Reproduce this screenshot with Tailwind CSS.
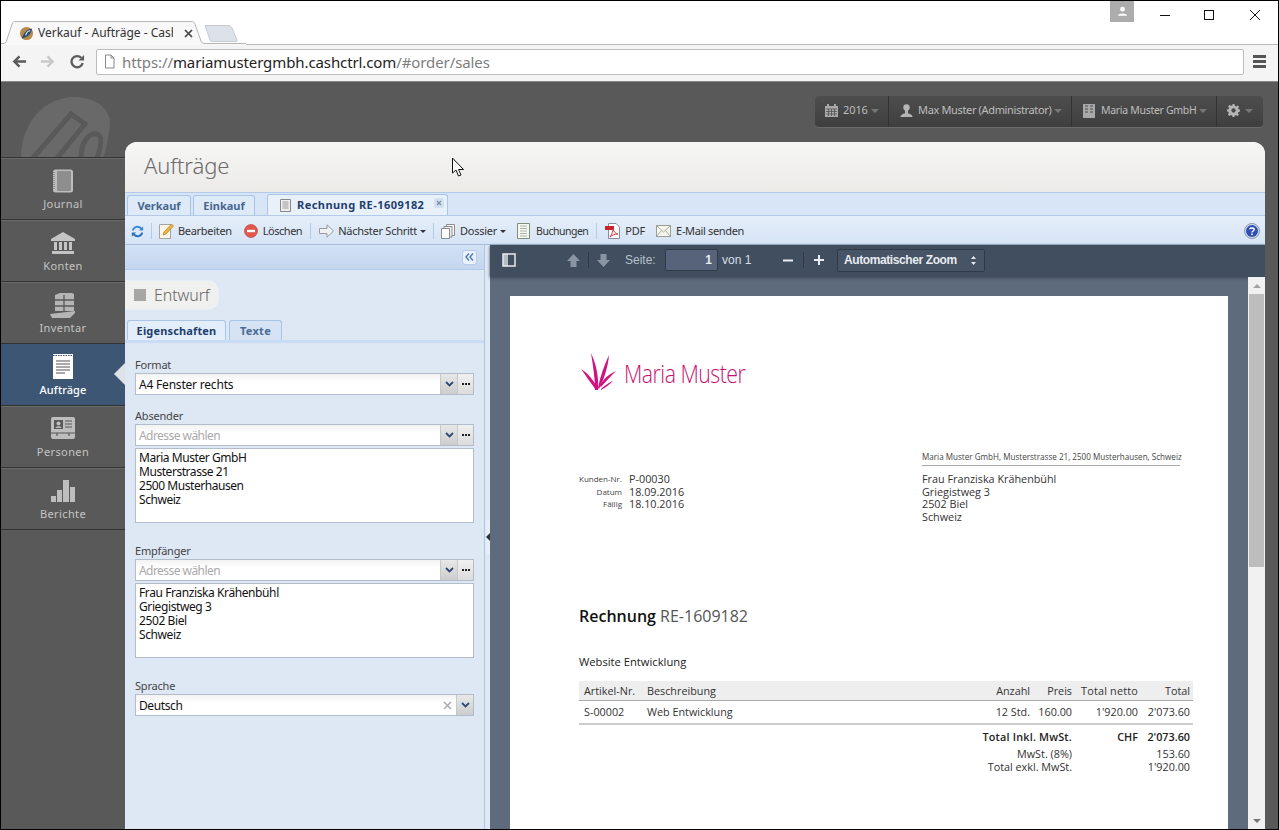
<!DOCTYPE html>
<html lang="de">
<head>
<meta charset="utf-8">
<title>Verkauf - Aufträge - CashCtrl</title>
<script src="https://cdn.jsdelivr.net/npm/@tailwindcss/browser@4"></script>
</head>
<body class="m-0 overflow-hidden bg-black">
<div class="relative flex h-[830px] w-[1279px] flex-col overflow-hidden border border-black bg-white font-['Noto_Sans',sans-serif]">

  <!-- Browser tab strip -->
  <div class="relative flex h-[44px] shrink-0 items-end border-b border-[#bcbcbc] bg-white pl-[18px]">
    <svg class="absolute left-0 top-0 h-[44px] w-[245px]" viewBox="0 0 245 44">
      <path d="M204 24.500H226C229 24.500 230 25 231 27L236 39C236.500 40 236 40.500 235 40.500H212C210 40.500 209.500 40 209 39Z" fill="#dde2ea" stroke="#c8ccd2"/>
      <path d="M0 44V42.500H2C4 42.500 5 41.500 5.500 40L11 23C11.500 21 13 20.500 15 20.500H190C192 20.500 193.500 21 194 23L200 40C200.500 41.500 201.500 42.500 204 42.500H245V44Z" fill="#f8f8f8"/>
      <path d="M0 42.500H2C4 42.500 5 41.500 5.500 40L11 23C11.500 21 13 20.500 15 20.500H190C192 20.500 193.500 21 194 23L200 40C200.500 41.500 201.500 42.500 204 42.500H245" fill="none" stroke="#b5b5b5"/>
    </svg>
    <div class="relative z-10 flex h-[22px] items-center">
      <svg class="h-[15px] w-[15px] shrink-0" viewBox="0 0 16 16"><circle cx="8" cy="8" r="7" fill="#b88a4a"/><path d="M3 13C5 8 8 3 14 3C13 8 10 12 3 13Z" fill="#234a7d"/><path d="M7 10C8 7 10 5 12 5" stroke="#e8e8e8" stroke-width="1.200" fill="none"/></svg>
      <span class="ml-[4px] w-[135px] overflow-hidden whitespace-nowrap text-[12px] leading-[16px] text-[#333]">Verkauf - Aufträge - CashCtrl</span>
      <svg class="ml-[11px] h-[9px] w-[9px]" viewBox="0 0 9 9"><path d="M1 1L8 8M8 1L1 8" stroke="#444" stroke-width="1.700"/></svg>
    </div>
    <div class="absolute right-[144px] top-0 flex h-[21px] w-[24px] items-center justify-center bg-[#acacac]">
      <svg class="h-[11px] w-[11px]" viewBox="0 0 12 12"><circle cx="6" cy="3.500" r="2.600" fill="#fff"/><path d="M1 10.500C1.500 7.500 10.500 7.500 11 10.500Z" fill="#fff"/></svg>
    </div>
    <div class="absolute left-[1158px] top-[8px] flex items-center">
      <svg class="h-[12px] w-[12px]" viewBox="0 0 12 12"><path d="M1 6.500H11" stroke="#111" stroke-width="1"/></svg>
      <svg class="ml-[32px] h-[12px] w-[12px]" viewBox="0 0 12 12"><rect x="1.500" y="1.500" width="9" height="9" fill="none" stroke="#111"/></svg>
      <svg class="ml-[34px] h-[12px] w-[12px]" viewBox="0 0 12 12"><path d="M1 1L11 11M11 1L1 11" stroke="#111" stroke-width="1"/></svg>
    </div>
  </div>

  <!-- Browser toolbar -->
  <div class="flex h-[36px] shrink-0 items-center bg-[#f4f4f4] pb-[3px] pl-[11px]">
    <svg class="h-[15px] w-[15px]" viewBox="0 0 16 16"><path d="M15 8H3M8 2.500L2.500 8L8 13.500" fill="none" stroke="#5a5a5a" stroke-width="2.600"/></svg>
    <svg class="ml-[13px] h-[15px] w-[15px]" viewBox="0 0 16 16"><path d="M1 8H13M8 2.500L13.500 8L8 13.500" fill="none" stroke="#c8c8c8" stroke-width="2.600"/></svg>
    <svg class="ml-[15px] h-[15px] w-[15px]" viewBox="0 0 16 16"><path d="M13.500 9.500A6 6 0 1 1 12 4" fill="none" stroke="#5a5a5a" stroke-width="2.400"/><path d="M15 1V7H9Z" fill="#5a5a5a"/></svg>
    <div class="ml-[11px] flex h-[26px] w-[1148px] items-center rounded-[2px] border border-[#bdbdbd] bg-white pl-[6px]">
      <svg class="h-[15px] w-[13px]" viewBox="0 0 13 15"><path d="M2.500 1H8L11 4V14H2.500Z" fill="#fff" stroke="#8a8a8a"/><path d="M8 1V4H11" fill="none" stroke="#8a8a8a"/></svg>
      <span class="ml-[6px] whitespace-nowrap text-[15px] leading-[20px] tracking-[-0.1px] text-[#7d7d7d]">https://<span class="text-[#222]">mariamustergmbh.cashctrl.com</span>/#order/sales</span>
    </div>
    <div class="ml-[9px] flex w-[13px] flex-col gap-[2px]">
      <div class="h-[3px] bg-[#555]"></div><div class="h-[3px] bg-[#555]"></div><div class="h-[3px] bg-[#555]"></div>
    </div>
  </div>

  <!-- App -->
  <div class="flex min-h-0 flex-1 border-t border-[#8a8a8a] bg-[#595959]">

    <!-- Sidebar -->
    <aside class="flex w-[124px] shrink-0 flex-col">
      <div class="relative h-[75px] shrink-0 overflow-hidden">
        <svg class="absolute left-[18px] top-[14px] h-[62px] w-[92px]" viewBox="0 0 92 62"><path d="M2 62C2 28 24 1 56 1C74 1 88 10 91 24C91 36 88 50 84 62Z" fill="#696969"/><path d="M14 62L52 18L66 28L38 62M62 62C62 46 70 36 78 38C84 40 82 52 78 62" fill="none" stroke="#595959" stroke-width="5"/></svg>
      </div>
      <nav class="flex flex-col border-t border-[#333] text-[11px] tracking-[0.4px] text-[#c4c4c4]">
        <a class="flex h-[62px] flex-col items-center border-b border-[#333] pt-[11px] shadow-[inset_0_1px_0_#6a6a6a]">
          <svg class="h-[24px] w-[22px]" viewBox="0 0 22 24"><rect x="1" y="0.500" width="20" height="23" rx="2.500" fill="#bdbdbd"/><rect x="5" y="2" width="14" height="20" rx="1" fill="#8e8e8e"/><path d="M2 3V21" stroke="#666" stroke-width="1" stroke-dasharray="1 1"/></svg>
          <span class="mt-[4px] leading-[14px]">Journal</span>
        </a>
        <a class="flex h-[62px] flex-col items-center border-b border-[#333] pt-[11px] shadow-[inset_0_1px_0_#6a6a6a]">
          <svg class="h-[24px] w-[26px]" viewBox="0 0 26 24"><path d="M13 1L25 8V10H1V8Z" fill="#c4c4c4"/><path d="M4 11H7V19H4ZM9 11H12V19H9ZM14 11H17V19H14ZM19 11H22V19H19Z" fill="#c4c4c4"/><path d="M2 20H24V23H2Z" fill="#c4c4c4"/></svg>
          <span class="mt-[4px] leading-[14px]">Konten</span>
        </a>
        <a class="flex h-[62px] flex-col items-center border-b border-[#333] pt-[11px] shadow-[inset_0_1px_0_#6a6a6a]">
          <svg class="h-[25px] w-[26px]" viewBox="0 0 26 25"><path d="M5 2L10 0H22L24 1V18H5Z" fill="#b5b5b5"/><path d="M5 7H24M5 13H24M14 2V18" stroke="#595959" stroke-width="1.300"/><path d="M0 21L25 18V20L20 25H2Z" fill="#b5b5b5"/></svg>
          <span class="mt-[3px] leading-[14px]">Inventar</span>
        </a>
        <a class="relative flex h-[62px] flex-col items-center border-b border-[#333] bg-[#3d5674] pt-[10px] font-medium text-white">
          <svg class="h-[25px] w-[20px]" viewBox="0 0 20 25"><rect width="20" height="25" fill="#fff"/><path d="M0 1.500H20" stroke="#3d5674" stroke-width="1" stroke-dasharray="1.500 1"/><path d="M3 7H17M3 10H17M3 13H17M3 16H17M3 19H12" stroke="#555" stroke-width="1.200"/></svg>
          <span class="mt-[4px] leading-[14px] tracking-[0.1px]">Aufträge</span>
          <div class="absolute right-0 top-[19px] h-0 w-0 border-y-[11px] border-r-[11px] border-y-transparent border-r-[#dfe3e8]"></div>
        </a>
        <a class="flex h-[62px] flex-col items-center border-b border-[#333] pt-[11px] shadow-[inset_0_1px_0_#6a6a6a]">
          <svg class="h-[22px] w-[24px]" viewBox="0 0 24 22"><rect width="24" height="22" rx="2" fill="#bdbdbd"/><rect x="3" y="3" width="9" height="9" fill="#595959"/><circle cx="7.500" cy="6.500" r="2" fill="#bdbdbd"/><path d="M4.500 11C5 8.500 10 8.500 10.500 11Z" fill="#bdbdbd"/><path d="M14 4H21M14 7H21M14 10H21M0 16H24M6 16V19M18 16V19" stroke="#595959" stroke-width="1.200"/></svg>
          <span class="mt-[6px] leading-[14px]">Personen</span>
        </a>
        <a class="flex h-[62px] flex-col items-center border-b border-[#333] pt-[11px] shadow-[inset_0_1px_0_#6a6a6a]">
          <svg class="h-[24px] w-[25px]" viewBox="0 0 25 24"><path d="M0 17H5V23H0ZM6 11H11V23H6ZM12 1H18V23H12ZM19 8H24V23H19Z" fill="#bdbdbd"/></svg>
          <span class="mt-[4px] leading-[14px]">Berichte</span>
        </a>
      </nav>
    </aside>

    <!-- Main -->
    <main class="flex min-w-0 flex-1 flex-col pr-[13px]">
      <div class="flex h-[60px] shrink-0 items-start justify-end pr-[2px] pt-[14px] text-[11px] text-[#bdbdbd]">
        <div class="flex h-[31px] items-center rounded-[4px] bg-gradient-to-b from-[#4e4e4e] to-[#3e3e3e] shadow-[0_1px_0_#6a6a6a]">
          <div class="flex h-full w-[74px] items-center border-r border-[#333] pb-[2px] pl-[10px]">
            <svg class="h-[13px] w-[13px]" viewBox="0 0 13 13"><path d="M0 2H13V13H0Z" fill="#a9a9a9"/><path d="M3 0V3M10 0V3" stroke="#a9a9a9" stroke-width="2"/><path d="M1 5H12M1 7.500H12M1 10H12M3.500 5V12M6.500 5V12M9.500 5V12" stroke="#4a4a4a" stroke-width=".7"/></svg>
            <span class="ml-[5px] w-[28px] tracking-[-0.1px]">2016</span><span class="h-0 w-0 border-x-[4px] border-t-[4px] border-x-transparent border-t-[#777]"></span>
          </div>
          <div class="flex h-full w-[183px] items-center border-r border-[#333] pb-[2px] pl-[11px]">
            <svg class="h-[13px] w-[13px]" viewBox="0 0 13 13"><circle cx="6.500" cy="3.500" r="3.200" fill="#b5b5b5"/><path d="M0.500 13C1 8 12 8 12.500 13Z" fill="#b5b5b5"/><rect x="5" y="5" width="3" height="5" fill="#b5b5b5"/></svg>
            <span class="ml-[5px] w-[136px] whitespace-nowrap tracking-[-0.35px]">Max Muster (Administrator)</span><span class="h-0 w-0 border-x-[4px] border-t-[4px] border-x-transparent border-t-[#777]"></span>
          </div>
          <div class="flex h-full w-[145px] items-center border-r border-[#333] pb-[2px] pl-[11px]">
            <svg class="h-[14px] w-[12px]" viewBox="0 0 12 14"><path d="M0 0H12V14H0Z" fill="#a9a9a9"/><path d="M2 2H5M7 2H10M2 5H5M7 5H10M2 8H5M7 8H10" stroke="#4a4a4a"/></svg>
            <span class="ml-[6px] w-[98px] whitespace-nowrap text-[10.500px] tracking-[-0.3px]">Maria Muster GmbH</span><span class="h-0 w-0 border-x-[4px] border-t-[4px] border-x-transparent border-t-[#777]"></span>
          </div>
          <div class="flex h-full w-[46px] items-center pb-[2px] pl-[10px]">
            <svg class="h-[13px] w-[13px]" viewBox="0 0 14 14"><path d="M6 0H8L8.500 2L10 2.600L11.800 1.600L13 3L12 4.700L12.500 6H14V8L12.300 8.500L11.800 10L12.800 11.700L11.300 13L9.700 12L8.300 12.500L8 14H6L5.600 12.300L4.200 11.800L2.500 12.800L1 11.300L2 9.700L1.500 8.300L0 8V6L1.700 5.600L2.200 4.200L1.200 2.500L2.700 1L4.300 2L5.700 1.500Z" fill="#b5b5b5"/><circle cx="7" cy="7" r="2.300" fill="#484848"/></svg>
            <span class="ml-[5px] h-0 w-0 border-x-[4px] border-t-[4px] border-x-transparent border-t-[#777]"></span>
          </div>
        </div>
      </div>

      <!-- Panel -->
      <section class="flex min-h-0 flex-1 flex-col overflow-hidden rounded-t-[12px] bg-[#f1f1ef]">
        <header class="flex h-[50px] shrink-0 items-center bg-gradient-to-b from-[#f6f6f5] to-[#ecebe8] pb-[4px] pl-[19px]">
          <h1 class="text-[22px] font-light leading-[28px] tracking-[-0.1px] text-[#6b6b6b]">Aufträge</h1>
        </header>

        <!-- Tabs -->
        <div class="flex h-[24px] shrink-0 items-end gap-[2px] border-y border-[#b3cbe8] bg-[#d8e5f6] pl-[2px] text-[11px] font-bold leading-[14px] text-[#47688f]">
          <div class="flex h-[20px] w-[64px] items-center justify-center rounded-t-[3px] border border-b-0 border-[#a9c5e6] bg-[#deeaf8]">Verkauf</div>
          <div class="flex h-[20px] w-[62px] items-center justify-center rounded-t-[3px] border border-b-0 border-[#a9c5e6] bg-[#deeaf8]">Einkauf</div>
          <div class="relative ml-[10px] flex h-[21px] w-[181px] items-center rounded-t-[3px] border border-b-0 border-[#a9c5e6] bg-[#e8f0fa] pl-[12px] text-[#1f3f6e]">
            <svg class="mr-[6px] h-[13px] w-[11px]" viewBox="0 0 11 13"><path d="M0.500 0.500H10.500V12.500H0.500Z" fill="#eee" stroke="#888"/><path d="M2.500 3H8.500M2.500 5H8.500M2.500 7H8.500M2.500 9H8.500" stroke="#999"/></svg>
            <span class="whitespace-nowrap tracking-[0.45px]">Rechnung RE-1609182</span>
            <div class="absolute right-[3px] top-[3px] flex h-[10px] w-[10px] items-center justify-center rounded-[2px] bg-[#d3e0f1]">
              <svg class="h-[6px] w-[6px]" viewBox="0 0 6 6"><path d="M1 1L5 5M5 1L1 5" stroke="#7d8fa6" stroke-width="1.300"/></svg>
            </div>
          </div>
        </div>

        <!-- Toolbar -->
        <div class="flex h-[28px] shrink-0 items-center bg-gradient-to-b from-[#e5eefa] to-[#d6e4f6] pl-[5px] pr-[5px] pt-[2px] text-[11px] leading-[14px] text-[#333]">
          <svg class="h-[15px] w-[15px]" viewBox="0 0 16 16"><path d="M2 7A6 6 0 0 1 12.500 4L14 2.500V7H9.500L11 5.500A4 4 0 0 0 4 7Z" fill="#3b87d8"/><path d="M14 9A6 6 0 0 1 3.500 12L2 13.500V9H6.500L5 10.500A4 4 0 0 0 12 9Z" fill="#2a6fc0"/></svg>
          <div class="ml-[6px] mr-[7px] h-[16px] w-px bg-[#b4cae6]"></div>
          <svg class="mr-[4px] h-[16px] w-[15px]" viewBox="0 0 15 16"><path d="M0.500 1.500H11.500V15.500H0.500Z" fill="#fbf6e8" stroke="#a3a3a3"/><path d="M4 12L5 9L12.500 1L14.500 3L7 11Z" fill="#f0b23c" stroke="#a8741d" stroke-width=".6"/></svg>
          <span class="tracking-[-0.3px]">Bearbeiten</span>
          <svg class="ml-[12px] mr-[5px] h-[14px] w-[14px]" viewBox="0 0 14 14"><circle cx="7" cy="7" r="6.500" fill="#e2574c" stroke="#b53a31" stroke-width=".6"/><rect x="3" y="5.800" width="8" height="2.400" fill="#fff"/></svg>
          <span class="tracking-[-0.5px]">Löschen</span>
          <div class="ml-[8px] mr-[8px] h-[16px] w-px bg-[#b4cae6]"></div>
          <svg class="mr-[4px] h-[14px] w-[15px]" viewBox="0 0 15 14"><path d="M0.500 4.500H8V0.800L14.500 7L8 13.200V9.500H0.500Z" fill="#eef1f5" stroke="#9a9a9a"/></svg>
          <span class="tracking-[-0.25px]">Nächster Schritt</span>
          <span class="ml-[3px] h-0 w-0 border-x-[3px] border-t-[3px] border-x-transparent border-t-[#333]"></span>
          <div class="ml-[7px] mr-[7px] h-[16px] w-px bg-[#b4cae6]"></div>
          <svg class="mr-[5px] h-[15px] w-[14px]" viewBox="0 0 14 15"><path d="M5.500 0.500H13.500V11.500H5.500Z" fill="#fff" stroke="#8b8b8b"/><path d="M3 2.500H11V13H3Z" fill="#eee" stroke="#8b8b8b"/><path d="M0.500 4.500H8.500V14.500H0.500Z" fill="#fff" stroke="#8b8b8b"/></svg>
          <span class="tracking-[-0.25px]">Dossier</span>
          <span class="ml-[3px] h-0 w-0 border-x-[3px] border-t-[3px] border-x-transparent border-t-[#333]"></span>
          <svg class="ml-[10px] mr-[6px] h-[16px] w-[14px]" viewBox="0 0 14 16"><path d="M1.500 0.500H13.500V15.500H1.500Z" fill="#f4f8f0" stroke="#7f8f7a"/><path d="M4 3H11M4 5.500H11M4 8H11M4 10.500H11M4 13H11" stroke="#a9b5a5"/></svg>
          <span class="text-[10.500px] tracking-[-0.5px]">Buchungen</span>
          <div class="ml-[8px] mr-[8px] h-[16px] w-px bg-[#b4cae6]"></div>
          <svg class="mr-[4px] h-[16px] w-[16px]" viewBox="0 0 16 16"><path d="M3.500 0.500H11L14.500 4V15.500H3.500Z" fill="#fff" stroke="#8b8ba0"/><rect x="0" y="3" width="9" height="4" fill="#c8222a"/><path d="M5 14C7 11 8 8 8 6C9 9 11 11 13 11C10 11 7 12 5 14Z" fill="none" stroke="#d23a3a"/></svg>
          <span class="tracking-[-0.2px]">PDF</span>
          <svg class="ml-[11px] mr-[5px] h-[12px] w-[15px]" viewBox="0 0 15 12"><rect x="0.500" y="0.500" width="14" height="11" fill="#f4f6ee" stroke="#9aa093"/><path d="M1 1L7.500 7L14 1M1 11L5.500 5.500M14 11L9.500 5.500" fill="none" stroke="#aab0a3"/></svg>
          <span class="tracking-[-0.35px]">E-Mail senden</span>
          <svg class="ml-auto h-[16px] w-[16px]" viewBox="0 0 16 16"><circle cx="8" cy="8" r="7.500" fill="#d5dcec" stroke="#8d97ad"/><circle cx="8" cy="8" r="6" fill="#2f4fb5"/><path d="M5.800 6.200C5.800 4.500 10.200 4.300 10.200 6.500C10.200 8 8 8 8 9.500" fill="none" stroke="#fff" stroke-width="1.500"/><rect x="7.200" y="10.500" width="1.600" height="1.600" fill="#fff"/></svg>
        </div>

        <!-- Split -->
        <div class="flex min-h-0 flex-1 border-t border-[#a8bcd6]">

          <!-- Left form panel -->
          <div class="relative flex w-[360px] shrink-0 flex-col border-r border-[#a9c6ea] bg-[#dee8f5] text-[12px] leading-[16px]">
            <div class="flex h-[25px] shrink-0 items-center justify-end border-b border-[#b3cbe8] bg-gradient-to-b from-[#d3e2f5] to-[#c3d6ef] pr-[7px]">
              <div class="flex h-[15px] w-[15px] items-center justify-center rounded-[3px] border border-[#b5cbe6] bg-[#eaf1fa]">
                <svg class="h-[8px] w-[9px]" viewBox="0 0 9 8"><path d="M4 0.500L1 4L4 7.500M8 0.500L5 4L8 7.500" fill="none" stroke="#4a7ab8" stroke-width="1.400"/></svg>
              </div>
            </div>
            <div class="mt-[11px] flex h-[28px] w-[93px] items-center rounded-r-[10px] bg-[#f0f0ee] pl-[9px] shadow-[0_0_2px_#fff]">
              <div class="h-[12px] w-[12px] bg-[#a6a6a6]"></div>
              <span class="ml-[8px] text-[16px] font-light leading-[22px] tracking-[-0.1px] text-[#666]">Entwurf</span>
            </div>
            <div class="mt-[11px] flex h-[23px] shrink-0 items-end gap-[3px] border-b-[3px] border-b-[#c9dcf3] pl-[2px] text-[11px] font-bold text-[#4a6c96]">
              <div class="flex h-[20px] w-[99px] items-center justify-center rounded-t-[3px] border border-b-0 border-[#a9c5e6] bg-[#e4eefa] tracking-[0.15px] text-[#1f3f6e]">Eigenschaften</div>
              <div class="flex h-[20px] w-[53px] items-center justify-center rounded-t-[3px] border border-b-0 border-[#a9c5e6] bg-[#d5e3f5] tracking-[0.3px]">Texte</div>
            </div>

            <form class="flex flex-col px-[10px] pt-[15px] tracking-[-0.2px] text-[#111]">
              <label class="text-[11px] leading-[14px] text-[#444]">Format</label>
              <div class="mt-[1px] flex h-[22px] w-[339px] items-center border border-[#b2bccb] bg-gradient-to-b from-[#f2f2f2] to-white to-40% pl-[3px]">
                <span class="flex-1 pt-[1px]">A4 Fenster rechts</span>
                <div class="flex h-full w-[17px] items-center justify-center border-l border-[#c8c8c8] bg-gradient-to-b from-[#e8e8e8] to-[#cdcdcd]"><svg class="h-[6px] w-[9px]" viewBox="0 0 9 6"><path d="M1 1L4.500 4.500L8 1" fill="none" stroke="#2d4a76" stroke-width="1.800"/></svg></div>
                <div class="flex h-full w-[16px] items-center justify-center border-l border-[#c8c8c8] bg-gradient-to-b from-[#f0f0f0] to-[#dcdcdc]"><svg class="h-[2px] w-[8px]" viewBox="0 0 8 2"><path d="M0 0H2V2H0ZM3 0H5V2H3ZM6 0H8V2H6Z" fill="#222"/></svg></div>
              </div>

              <label class="mt-[14px] text-[11px] leading-[14px] text-[#444]">Absender</label>
              <div class="mt-[1px] flex h-[22px] w-[339px] items-center border border-[#b2bccb] bg-gradient-to-b from-[#f2f2f2] to-white to-40% pl-[3px]">
                <span class="flex-1 pt-[1px] tracking-[-0.55px] text-[#aaa]">Adresse wählen</span>
                <div class="flex h-full w-[17px] items-center justify-center border-l border-[#c8c8c8] bg-gradient-to-b from-[#e8e8e8] to-[#cdcdcd]"><svg class="h-[6px] w-[9px]" viewBox="0 0 9 6"><path d="M1 1L4.500 4.500L8 1" fill="none" stroke="#2d4a76" stroke-width="1.800"/></svg></div>
                <div class="flex h-full w-[16px] items-center justify-center border-l border-[#c8c8c8] bg-gradient-to-b from-[#f0f0f0] to-[#dcdcdc]"><svg class="h-[2px] w-[8px]" viewBox="0 0 8 2"><path d="M0 0H2V2H0ZM3 0H5V2H3ZM6 0H8V2H6Z" fill="#222"/></svg></div>
              </div>
              <div class="mt-[2px] h-[75px] w-[339px] border border-[#b2bccb] bg-white px-[3px] pt-[2px] text-[12px] leading-[14px] tracking-[-0.45px]">Maria Muster GmbH<br>Musterstrasse 21<br>2500 Musterhausen<br>Schweiz</div>

              <label class="mt-[21px] text-[11px] leading-[14px] text-[#444]">Empfänger</label>
              <div class="mt-[1px] flex h-[22px] w-[339px] items-center border border-[#b2bccb] bg-gradient-to-b from-[#f2f2f2] to-white to-40% pl-[3px]">
                <span class="flex-1 pt-[1px] tracking-[-0.55px] text-[#aaa]">Adresse wählen</span>
                <div class="flex h-full w-[17px] items-center justify-center border-l border-[#c8c8c8] bg-gradient-to-b from-[#e8e8e8] to-[#cdcdcd]"><svg class="h-[6px] w-[9px]" viewBox="0 0 9 6"><path d="M1 1L4.500 4.500L8 1" fill="none" stroke="#2d4a76" stroke-width="1.800"/></svg></div>
                <div class="flex h-full w-[16px] items-center justify-center border-l border-[#c8c8c8] bg-gradient-to-b from-[#f0f0f0] to-[#dcdcdc]"><svg class="h-[2px] w-[8px]" viewBox="0 0 8 2"><path d="M0 0H2V2H0ZM3 0H5V2H3ZM6 0H8V2H6Z" fill="#222"/></svg></div>
              </div>
              <div class="mt-[2px] h-[75px] w-[339px] border border-[#b2bccb] bg-white px-[3px] pt-[2px] text-[12px] leading-[14px] tracking-[-0.4px]">Frau Franziska Krähenbühl<br>Griegistweg 3<br>2502 Biel<br>Schweiz</div>

              <label class="mt-[21px] text-[11px] leading-[14px] text-[#444]">Sprache</label>
              <div class="mt-[1px] flex h-[22px] w-[339px] items-center border border-[#b2bccb] bg-gradient-to-b from-[#f2f2f2] to-white to-40% pl-[3px]">
                <span class="flex-1 pt-[1px] tracking-[-0.4px]">Deutsch</span>
                <svg class="mr-[4px] h-[9px] w-[9px]" viewBox="0 0 9 9"><path d="M1 1L8 8M8 1L1 8" stroke="#aaa" stroke-width="1.500"/></svg>
                <div class="flex h-full w-[17px] items-center justify-center border-l border-[#c8c8c8] bg-gradient-to-b from-[#e8e8e8] to-[#cdcdcd]"><svg class="h-[6px] w-[9px]" viewBox="0 0 9 6"><path d="M1 1L4.500 4.500L8 1" fill="none" stroke="#2d4a76" stroke-width="1.800"/></svg></div>
              </div>
            </form>
          </div>

          <!-- Splitter -->
          <div class="flex w-[5px] shrink-0 items-start justify-center bg-[#dfe8f5] pt-[275px]">
            <div class="flex h-[34px] w-[4px] items-center justify-center rounded-l-[2px] bg-[#e9eef5]">
              <div class="h-0 w-0 border-y-[4px] border-r-[4px] border-y-transparent border-r-[#333]"></div>
            </div>
          </div>

          <!-- PDF viewer -->
          <div class="flex min-w-0 flex-1 flex-col bg-[#5e6b7c] font-['Liberation_Sans',sans-serif]">
            <div class="flex h-[32px] shrink-0 items-center bg-[#414e5f] pb-[2px] pl-[12px] text-[12px] leading-[16px] text-[#d8dde3] shadow-[0_1px_3px_#3a4655]">
              <svg class="h-[14px] w-[14px]" viewBox="0 0 14 14"><rect x="1" y="1" width="12" height="12" fill="none" stroke="#e8ebef" stroke-width="1.500"/><rect x="1" y="1" width="5" height="12" fill="#e8ebef" fill-opacity=".7"/></svg>
              <svg class="ml-[50px] h-[15px] w-[15px]" viewBox="0 0 15 15"><path d="M7.500 1L14 8H10.500V14H4.500V8H1Z" fill="#8a95a3"/></svg>
              <div class="mx-[7px] h-[16px] w-px bg-[#2f3a49]"></div>
              <svg class="h-[15px] w-[15px]" viewBox="0 0 15 15"><path d="M7.500 14L14 7H10.500V1H4.500V7H1Z" fill="#8a95a3"/></svg>
              <span class="ml-[14px] w-[31px] font-medium text-[#b8c0ca]">Seite:</span>
              <div class="ml-[9px] flex h-[22px] w-[53px] items-center justify-end rounded-[2px] border border-[#2f3a49] bg-[#56637a] pr-[5px] font-bold text-[#e8ebef]">1</div>
              <span class="ml-[4px] w-[29px] whitespace-nowrap font-medium">von 1</span>
              <svg class="ml-[31px] h-[12px] w-[12px]" viewBox="0 0 12 12"><path d="M1 6.500H11" stroke="#e8ebef" stroke-width="2"/></svg>
              <div class="mx-[9px] h-[16px] w-px bg-[#2f3a49]"></div>
              <svg class="h-[12px] w-[12px]" viewBox="0 0 12 12"><path d="M1 6H11M6 1V11" stroke="#e8ebef" stroke-width="2"/></svg>
              <div class="ml-[12px] flex h-[23px] w-[148px] items-center rounded-[2px] border border-[#2f3a49] bg-[#465466] pl-[6px] pr-[8px] font-bold text-[#e8ebef]">
                <span class="flex-1 whitespace-nowrap tracking-[-0.4px]">Automatischer Zoom</span>
                <svg class="h-[9px] w-[5px]" viewBox="0 0 5 9"><path d="M2.500 0L5 3H0ZM2.500 9L0 6H5Z" fill="#e8ebef"/></svg>
              </div>
            </div>

            <div class="flex min-h-0 flex-1">
              <div class="min-w-0 flex-1 overflow-hidden pl-[20px] pt-[19px]">
                <!-- Document page -->
                <article class="relative h-[620px] w-[718px] bg-white font-['Open_Sans',sans-serif] text-[10.800px] leading-[14px] text-[#333]">
                  <div class="absolute left-[71px] top-[56px] flex items-center">
                    <svg class="h-[38px] w-[36px]" viewBox="0 0 36 38" fill="#d2127f"><path d="M14 38C14 26 12 14 10 1C15 12 18 24 17 38Z"/><path d="M15 38C9 30 5 24 0 17C8 22 13 29 17 37Z"/><path d="M17 36C19 25 23 14 28 3C27 15 23 27 18 37Z"/><path d="M19 34C22 27 28 22 35 19C30 24 25 29 20 35Z"/><path d="M20 37C24 33 29 30 32 29C28 33 24 36 20 38Z"/></svg>
                    <span class="ml-[7px] origin-left scale-x-[0.85] whitespace-nowrap pt-[3px] text-[25px] font-light leading-[34px] tracking-[-0.6px] text-[#c8106f]">Maria Muster</span>
                  </div>

                  <div class="absolute left-[69px] top-[177px] grid grid-cols-[43px_auto] gap-x-[7px] gap-y-0 leading-[12.500px]">
                    <span class="whitespace-nowrap text-right text-[8px] text-[#444]">Kunden-Nr.</span><span>P-00030</span>
                    <span class="text-right text-[8px] text-[#444]">Datum</span><span>18.09.2016</span>
                    <span class="text-right text-[8px] text-[#444]">Fällig</span><span>18.10.2016</span>
                  </div>

                  <div class="absolute left-[412px] top-[155px] w-[258px] whitespace-nowrap border-b border-[#aaa] pb-[3px] text-[8.100px] leading-[11px] text-[#444]">Maria Muster GmbH, Musterstrasse 21, 2500 Musterhausen, Schweiz</div>
                  <div class="absolute left-[412px] top-[177px] leading-[12.500px]">Frau Franziska Krähenbühl<br>Griegistweg 3<br>2502 Biel<br>Schweiz</div>

                  <h2 class="absolute left-[69px] top-[309px] text-[16px] leading-[22px] text-[#555]"><span class="font-semibold text-[#111]">Rechnung</span> RE-1609182</h2>
                  <p class="absolute left-[69px] top-[358px] text-[11.200px] leading-[16px] text-[#222]">Website Entwicklung</p>

                  <div class="absolute left-[69px] top-[385px] w-[614px]">
                    <div class="flex h-[20px] items-center border-b border-[#aaa] bg-[#eeeeee] pr-[3px] pl-[5px] font-medium text-[#333]">
                      <span class="w-[63px] whitespace-nowrap">Artikel-Nr.</span><span class="flex-1">Beschreibung</span><span class="w-[50px] text-right">Anzahl</span><span class="w-[42px] text-right">Preis</span><span class="w-[66px] whitespace-nowrap text-right tracking-[0.2px]">Total netto</span><span class="w-[52px] text-right">Total</span>
                    </div>
                    <div class="flex h-[24px] items-center border-b-2 border-[#ccc] pr-[3px] pl-[5px]">
                      <span class="w-[63px]">S-00002</span><span class="flex-1">Web Entwicklung</span><span class="w-[50px] text-right">12 Std.</span><span class="w-[42px] text-right">160.00</span><span class="w-[66px] text-right">1'920.00</span><span class="w-[52px] text-right">2'073.60</span>
                    </div>
                    <div class="mt-[5px] flex h-[13px] items-center pr-[3px] font-semibold text-[#222]"><span class="flex-1 text-right tracking-[0.2px]">Total Inkl. MwSt.</span><span class="w-[66px] text-right">CHF</span><span class="w-[52px] text-right">2'073.60</span></div>
                    <div class="mt-[4px] flex h-[13px] items-center pr-[3px]"><span class="flex-1 text-right">MwSt. (8%)</span><span class="w-[118px] text-right">153.60</span></div>
                    <div class="flex h-[14px] items-center pr-[3px]"><span class="flex-1 text-right">Total exkl. MwSt.</span><span class="w-[118px] text-right">1'920.00</span></div>
                  </div>
                </article>
              </div>

              <!-- Scrollbar -->
              <div class="flex w-[17px] shrink-0 flex-col bg-[#f1f1f1]">
                <div class="flex h-[17px] shrink-0 items-center justify-center"><div class="h-0 w-0 border-x-[4px] border-b-[4px] border-x-transparent border-b-[#a3a3a3]"></div></div>
                <div class="mx-[1px] h-[273px] shrink-0 bg-[#bdbdbd]"></div>
                <div class="flex-1"></div>
                <div class="flex h-[17px] shrink-0 items-center justify-center"><div class="h-0 w-0 border-x-[4px] border-t-[4px] border-x-transparent border-t-[#777]"></div></div>
              </div>
            </div>
          </div>
        </div>
      </section>
    </main>
  </div>

  <!-- Mouse cursor overlay -->
  <svg class="absolute left-[450px] top-[156px] h-[21px] w-[14px]" viewBox="0 0 14 21"><path d="M1.500 1V16L5 13L7.500 19L10 18L7.500 12.500H12.500Z" fill="#fff" stroke="#111"/></svg>
</div>
</body>
</html>
